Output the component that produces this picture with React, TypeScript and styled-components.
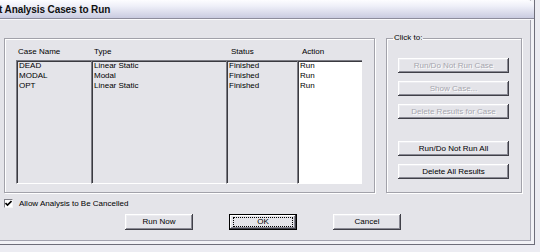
import styled, { createGlobalStyle } from "styled-components";

const GlobalStyle = createGlobalStyle`
  html, body {
    margin: 0;
    padding: 0;
    background: #ececf2;
  }
  body {
    font-family: "Liberation Sans", Arial, sans-serif;
    font-size: 8px;
    color: #000;
  }
`;

const rows = [
  { name: "DEAD", type: "Linear Static", status: "Finished", action: "Run" },
  { name: "MODAL", type: "Modal", status: "Finished", action: "Run" },
  { name: "OPT", type: "Linear Static", status: "Finished", action: "Run" },
];

const columns = [
  { key: "name", label: "Case Name", width: 75, head: 2, white: false },
  { key: "type", label: "Type", width: 135, head: 3, white: false },
  { key: "status", label: "Status", width: 71, head: 5, white: false },
  { key: "action", label: "Action", width: 65, head: 5, white: true },
] as const;

const App = () => {
  return (
    <>
      <GlobalStyle />
      <Window>
        <TitleBar>t Analysis Cases to Run</TitleBar>
        <Body>
          <GroupRow>
            <CasesGroup>
              <HeaderRow>
                {columns.map((c) => (
                  <HeaderCell key={c.key} $w={c.width} $pad={c.head}>
                    {c.label}
                  </HeaderCell>
                ))}
              </HeaderRow>
              <ListBox>
                {columns.map((c) => (
                  <Column key={c.key} $w={c.width} $white={c.white}>
                    {rows.map((r) => (
                      <Cell key={r.name}>{r[c.key]}</Cell>
                    ))}
                  </Column>
                ))}
              </ListBox>
            </CasesGroup>
            <ClickGroup>
              <Legend>Click to:</Legend>
              <ButtonStack>
                <SideButton disabled>Run/Do Not Run Case</SideButton>
                <SideButton disabled>Show Case...</SideButton>
                <SideButton disabled>Delete Results for Case</SideButton>
                <Spacer />
                <SideButton>Run/Do Not Run All</SideButton>
                <SideButton>Delete All Results</SideButton>
              </ButtonStack>
            </ClickGroup>
          </GroupRow>
          <CheckRow>
            <CheckBox>
              <svg width="7" height="7" viewBox="0 0 7 7">
                <path d="M0.5 3 L2.5 5 L6.5 1" stroke="#000" strokeWidth="1.6" fill="none" />
              </svg>
            </CheckBox>
            <span>Allow Analysis to Be Cancelled</span>
          </CheckRow>
          <ActionRow>
            <PushButton>Run Now</PushButton>
            <PushButton $default>
              <FocusRect>OK</FocusRect>
            </PushButton>
            <PushButton>Cancel</PushButton>
          </ActionRow>
        </Body>
      </Window>
    </>
  );
};

export default App;

const Window = styled.div`
  width: 535px;
  height: 245px;
  background: #e4e4e9;
  display: flex;
  flex-direction: column;
  box-sizing: border-box;
  border-right: 1px solid #6e6e7a;
  border-bottom: 1px solid #6e6e7a;
  box-shadow: inset -3px -3px 0 #f2f2f6, inset -4px -4px 0 #a4a4b0;
  overflow: hidden;
`;

const TitleBar = styled.div`
  height: 19px;
  box-sizing: border-box;
  margin-left: -1px;
  display: flex;
  align-items: center;
  font-weight: bold;
  font-size: 10px;
  letter-spacing: -0.1px;
  color: #101010;
  background: linear-gradient(#fdfdff 0%, #eeeff8 35%, #c9cbe0 100%);
  border-bottom: 1px solid #8c8c9c;
  border-top-right-radius: 6px;
`;

const Body = styled.div`
  flex: 1;
  padding: 13px 0 0 4px;
  border-top: 1px solid #fafafc;
`;

const GroupRow = styled.div`
  display: flex;
  align-items: flex-end;
  gap: 11px;
`;

const etched = `
  border: 1px solid #a2a2aa;
  box-shadow: 1px 1px 0 #fff, inset 1px 1px 0 #fff;
`;

const CasesGroup = styled.div`
  width: 371px;
  height: 155px;
  box-sizing: border-box;
  ${etched}
  padding-left: 11px;
`;

const HeaderRow = styled.div`
  height: 21px;
  display: flex;
  align-items: flex-end;
`;

const HeaderCell = styled.div<{ $w: number; $pad: number }>`
  width: ${(p) => p.$w}px;
  padding-left: ${(p) => p.$pad}px;
  box-sizing: border-box;
  line-height: 10px;
  padding-bottom: 3px;
`;

const ListBox = styled.div`
  display: flex;
  height: 124px;
`;

const Column = styled.div<{ $w: number; $white: boolean }>`
  width: ${(p) => p.$w}px;
  box-sizing: border-box;
  padding: 0 0 0 2px;
  background: ${(p) => (p.$white ? "#fff" : "#e4e4e9")};
  border-top: 1px solid #7c7c84;
  border-left: 1px solid #7c7c84;
  border-bottom: 1px solid #fff;
  box-shadow: inset 1px 1px 0 #3a3a40;
`;

const Cell = styled.div`
  line-height: 10px;
  height: 10px;
  white-space: nowrap;
`;

const ClickGroup = styled.fieldset`
  margin: 0;
  width: 136px;
  height: 160px;
  box-sizing: border-box;
  padding: 0 0 0 11px;
  ${etched}
`;

const Legend = styled.legend`
  margin-left: -5px;
  padding: 0 1px;
  line-height: 10px;
`;

const ButtonStack = styled.div`
  display: flex;
  flex-direction: column;
  gap: 8px;
  padding-top: 15px;
`;

const Spacer = styled.div`
  height: 6px;
`;

const bevel = `
  border: none;
  background: #e4e4e9;
  box-shadow: inset -1px -1px 0 #404048, inset 1px 1px 0 #fff,
    inset -2px -2px 0 #8a8a94, inset 2px 2px 0 #ececf0;
  font-family: "Liberation Sans", Arial, sans-serif;
  font-size: 8px;
  color: #000;
  padding: 0;
  cursor: default;
`;

const SideButton = styled.button`
  ${bevel}
  width: 111px;
  height: 15px;
  line-height: 14px;

  &:disabled {
    color: #a6a6ae;
    text-shadow: 1px 1px 0 #fff;
  }
`;

const CheckRow = styled.div`
  display: flex;
  align-items: center;
  gap: 6px;
  margin-top: 5px;
  height: 11px;
  line-height: 10px;
`;

const CheckBox = styled.span`
  width: 9px;
  height: 9px;
  box-sizing: border-box;
  background: #fff;
  border-top: 1px solid #808088;
  border-left: 1px solid #808088;
  border-right: 1px solid #f4f4f6;
  border-bottom: 1px solid #f4f4f6;
  display: flex;
  align-items: center;
  justify-content: center;
`;

const ActionRow = styled.div`
  display: flex;
  gap: 36px;
  padding-left: 121px;
  margin-top: 5px;
`;

const PushButton = styled.button<{ $default?: boolean }>`
  ${bevel}
  width: 68px;
  height: 16px;
  line-height: 15px;
  display: flex;
  align-items: stretch;
  justify-content: center;
  ${(p) =>
    p.$default &&
    `
    outline: 1px solid #000;
    outline-offset: -1px;
    box-shadow: inset -2px -2px 0 #404048, inset 2px 2px 0 #fff,
      inset -3px -3px 0 #8a8a94;
    padding: 3px 4px;
  `}
`;

const FocusRect = styled.span`
  flex: 1;
  border: 1px dotted #000;
  line-height: 8px;
  display: flex;
  align-items: center;
  justify-content: center;
`;
